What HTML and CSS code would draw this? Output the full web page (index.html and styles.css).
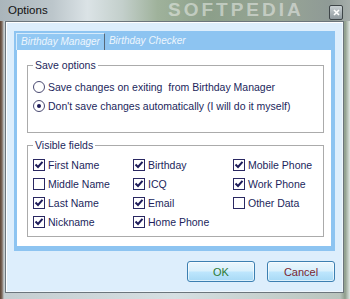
FILE: index.html
```html
<html>
<head>
    <link rel="stylesheet" href="styles.css">
</head>
<body>
    <div class="window">
        <div class="titlebar">
            <span class="titlebar__text">Options</span>
            <span class="titlebar__mark">SOFTPEDIA</span>
            <span class="titlebar__close">
                <svg width="7" height="7" viewBox="0 0 7 7"><path d="M1 1L6 6M6 1L1 6" stroke="#fff" stroke-width="1.6"/></svg>
            </span>
        </div>
        <div class="client">
            <div class="tabs">
                <div class="tabs__strip">
                    <span class="tab tab--active">Birthday Manager</span>
                    <span class="tab">Birthday Checker</span>
                </div>
                <div class="panel">
                    <fieldset class="group group--save">
                        <legend>Save options</legend>
                        <div class="option"><span class="radio"></span>Save changes on exiting&nbsp; from Birthday Manager</div>
                        <div class="option"><span class="radio radio--on"></span>Don't save changes automatically (I will do it myself)</div>
                    </fieldset>
                    <fieldset class="group group--fields">
                        <legend>Visible fields</legend>
                        <div class="fields">
                            <div class="option"><span class="check check--on"></span>First Name</div>
                            <div class="option"><span class="check check--on"></span>Birthday</div>
                            <div class="option"><span class="check check--on"></span>Mobile Phone</div>
                            <div class="option"><span class="check"></span>Middle Name</div>
                            <div class="option"><span class="check check--on"></span>ICQ</div>
                            <div class="option"><span class="check check--on"></span>Work Phone</div>
                            <div class="option"><span class="check check--on"></span>Last Name</div>
                            <div class="option"><span class="check check--on"></span>Email</div>
                            <div class="option"><span class="check"></span>Other Data</div>
                            <div class="option"><span class="check check--on"></span>Nickname</div>
                            <div class="option"><span class="check check--on"></span>Home Phone</div>
                        </div>
                    </fieldset>
                </div>
            </div>
            <div class="buttons">
                <button class="btn btn--ok">OK</button>
                <button class="btn btn--cancel">Cancel</button>
            </div>
        </div>
    </div>
</body>
</html>
```

FILE: styles.css
```css
body {
    margin: 0;
    font-family: "Liberation Sans", Arial, sans-serif;
    font-size: 10.5px;
    overflow: hidden;
}

.window {
    width: 350px;
    height: 299px;
    box-sizing: border-box;
    padding: 0 6px 6px 5px;
    background: linear-gradient(90deg, #5a4232 0, #7d6a5e 2px, #c4cdd0 4px, #d6dfe2 50%, #b9c4bd 340px, #8e9d8c 345px, #dfe6e2 350px);
}

.titlebar {
    position: relative;
    height: 21px;
    margin: 0 -6px 0 -5px;
    padding: 0 8px;
    display: flex;
    align-items: center;
    justify-content: space-between;
    background: linear-gradient(90deg, #aab5bb 0, #bcc6cb 15%, #dbe3e6 25%, #c3cfcb 35%, #9fb29b 45%, #8c9f8a 60%, #97a595 80%, #8f9a96 94%, #a6aeab 100%);
    overflow: hidden;
}

.titlebar__text {
    font-size: 11.5px;
    color: #111;
    margin-top: -2px;
}

.titlebar__mark {
    position: absolute;
    left: 168px;
    top: 0;
    font-size: 19px;
    line-height: 20px;
    font-weight: bold;
    letter-spacing: 3px;
    color: rgba(255, 255, 255, 0.45);
}

.titlebar__close {
    width: 12px;
    height: 13px;
    margin-right: -1px;
    margin-top: 3px;
    border: 1px solid #3e4548;
    border-radius: 2px;
    background: linear-gradient(#c9d0d3, #8f999e);
    display: flex;
    align-items: center;
    justify-content: center;
}

.client {
    height: 272px;
    box-sizing: border-box;
    border: 1px solid #6b757c;
    box-shadow: inset 1px 1px 0 #fff, inset -1px -1px 0 #eef6fc;
    background: #ddeefc;
    padding: 9px 8px 10px;
}

.tabs {
    height: 220px;
    box-sizing: border-box;
    background: #8dc4f1;
    padding: 0 4px 5px 3px;
    display: flex;
    flex-direction: column;
}

.tabs__strip {
    height: 19px;
    padding-top: 2px;
    box-sizing: border-box;
    display: flex;
}

.tab {
    height: 17px;
    box-sizing: border-box;
    padding: 2px 4px 0;
    font-style: italic;
    font-size: 10px;
    white-space: nowrap;
    color: #eef6fd;
}

.tab--active {
    margin-left: -1px;
    border-top: 1px solid #d6ebfb;
    border-left: 1px solid #d6ebfb;
    border-right: 1px solid #56697a;
    background: #92c8f3;
}

.panel {
    flex: 1;
    background: #fff;
    padding: 9px 7px 0 10px;
}

.group {
    margin: 0;
    padding: 0 5px;
    border: 1px solid #ababab;
    color: #221f5c;
}

.group legend {
    padding: 0 2px;
    line-height: 13px;
}

.group--save {
    height: 74px;
    padding-top: 5px;
    box-sizing: border-box;
}

.group--fields {
    margin-top: 6px;
    height: 98px;
    padding-top: 3px;
    box-sizing: border-box;
}

.fields {
    display: grid;
    grid-template-columns: 100px 100px 1fr;
}

.option {
    height: 19px;
    display: flex;
    align-items: center;
    gap: 3px;
    white-space: nowrap;
}

.radio,
.check {
    width: 12px;
    height: 12px;
    box-sizing: border-box;
    border: 1px solid #2a2862;
    background: #fff;
    flex: none;
}

.radio {
    border-radius: 50%;
    border-color: #4a4a72;
    display: flex;
    align-items: center;
    justify-content: center;
}

.radio--on::after {
    content: "";
    width: 4px;
    height: 4px;
    border-radius: 50%;
    background: #1e1c5a;
}

.check--on {
    background: #fff url("data:image/svg+xml,%3Csvg xmlns='http://www.w3.org/2000/svg' width='10' height='10'%3E%3Cpath d='M1.5 4.5L4 7L8.5 1.8' fill='none' stroke='%231e1c5a' stroke-width='2'/%3E%3C/svg%3E") no-repeat center;
}

.buttons {
    margin-top: 10px;
    display: flex;
    justify-content: flex-end;
    gap: 12px;
}

.btn {
    width: 68px;
    height: 21px;
    border: 1px solid #3c7fb1;
    border-radius: 3px;
    box-shadow: inset 0 0 0 1px rgba(255, 255, 255, 0.6);
    background: linear-gradient(#eaf6fd 0, #d9f0fc 48%, #bee6fd 52%, #a7d9f5 100%);
    font-family: "Liberation Sans", Arial, sans-serif;
    font-size: 11px;
    padding: 0;
}

.btn--ok {
    color: #2e7a35;
}

.btn--cancel {
    color: #7a2630;
}
```
